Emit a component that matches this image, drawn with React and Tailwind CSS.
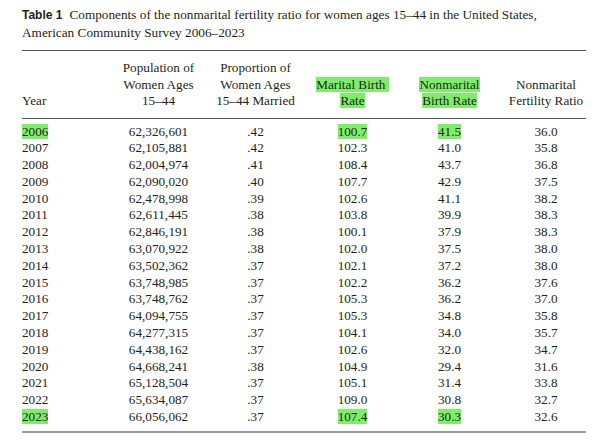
import React from "react";

const rows = [
  ["2006", "62,326,601", ".42", "100.7", "41.5", "36.0"],
  ["2007", "62,105,881", ".42", "102.3", "41.0", "35.8"],
  ["2008", "62,004,974", ".41", "108.4", "43.7", "36.8"],
  ["2009", "62,090,020", ".40", "107.7", "42.9", "37.5"],
  ["2010", "62,478,998", ".39", "102.6", "41.1", "38.2"],
  ["2011", "62,611,445", ".38", "103.8", "39.9", "38.3"],
  ["2012", "62,846,191", ".38", "100.1", "37.9", "38.3"],
  ["2013", "63,070,922", ".38", "102.0", "37.5", "38.0"],
  ["2014", "63,502,362", ".37", "102.1", "37.2", "38.0"],
  ["2015", "63,748,985", ".37", "102.2", "36.2", "37.6"],
  ["2016", "63,748,762", ".37", "105.3", "36.2", "37.0"],
  ["2017", "64,094,755", ".37", "105.3", "34.8", "35.8"],
  ["2018", "64,277,315", ".37", "104.1", "34.0", "35.7"],
  ["2019", "64,438,162", ".37", "102.6", "32.0", "34.7"],
  ["2020", "64,668,241", ".38", "104.9", "29.4", "31.6"],
  ["2021", "65,128,504", ".37", "105.1", "31.4", "33.8"],
  ["2022", "65,634,087", ".37", "109.0", "30.8", "32.7"],
  ["2023", "66,056,062", ".37", "107.4", "30.3", "32.6"],
];

const hl = "bg-[#7eee6a]";
const grid = "grid grid-cols-[88px_97px_97px_97px_97px_88px]";

const Mark = ({ on, children }) =>
  on ? <span className={hl}>{children}</span> : <span>{children}</span>;

export default function App() {
  return (
    <div className="w-[599px] h-[446px] bg-white px-[22px] pt-[6px] text-[#231f20] font-['Liberation_Serif',serif]">
      {/* caption */}
      <div className="text-[13.25px] leading-[17px]">
        <span className="font-['Liberation_Sans',sans-serif] font-bold text-[12px]">Table 1</span>
        <span className="ml-[7px]">
          Components of the nonmarital fertility ratio for women ages 15–44 in the United States,
        </span>
        <br />
        American Community Survey 2006–2023
      </div>

      <div className="w-[564px] mt-[9px] border-t border-[#555] text-[13.2px] leading-[16.5px]">
        {/* header */}
        <div className={`${grid} items-end pt-[9px] pb-[8px] border-b border-[#555]`}>
          <div>Year</div>
          <div className="text-center">
            Population of
            <br />
            Women Ages
            <br />
            15–44
          </div>
          <div className="text-center">
            Proportion of
            <br />
            Women Ages
            <br />
            15–44 Married
          </div>
          <div className="text-center">
            <span className={hl}>Marital Birth&nbsp;</span>
            <br />
            <span className={hl}>Rate</span>
          </div>
          <div className="text-center">
            <span className={hl}>Nonmarital</span>
            <br />
            <span className={hl}>Birth Rate</span>
          </div>
          <div className="text-center pl-[8px] whitespace-nowrap">
            Nonmarital
            <br />
            Fertility Ratio
          </div>
        </div>

        {/* body */}
        <div className="pt-[5px] pb-[5px] border-b-2 border-[#999]">
          {rows.map((r, i) => {
            const mark = i === 0 || i === rows.length - 1;
            return (
              <div key={r[0]} className={`${grid} leading-[16.8px]`}>
                <div>
                  <Mark on={mark}>{r[0]}</Mark>
                </div>
                <div className="text-center">{r[1]}</div>
                <div className="text-center">{r[2]}</div>
                <div className="text-center">
                  <Mark on={mark}>{r[3]}</Mark>
                </div>
                <div className="text-center">
                  <Mark on={mark}>{r[4]}</Mark>
                </div>
                <div className="text-center pl-[8px]">{r[5]}</div>
              </div>
            );
          })}
        </div>
      </div>
    </div>
  );
}
